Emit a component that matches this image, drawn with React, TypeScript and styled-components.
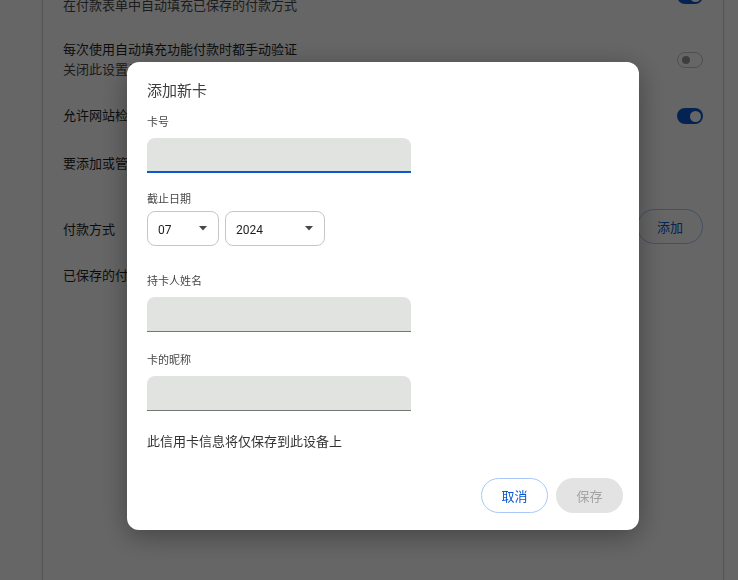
import React from "react";
import styled, { createGlobalStyle } from "styled-components";

const GlobalStyle = createGlobalStyle`
  html, body {
    margin: 0;
    padding: 0;
    height: 100%;
    overflow: hidden;
    background: #ffffff;
    font-family: Roboto, "Noto Sans CJK SC", sans-serif;
    color: #1f1f1f;
  }
`;

const Page = styled.div`
  height: 580px;
  overflow: hidden;
  padding: 0 15px 0 43px;
  box-sizing: border-box;
`;

const SettingsCard = styled.div`
  margin-top: -36px;
  background: #fff;
  min-height: 660px;
  box-shadow: 0 0 0 1px rgba(0, 0, 0, 0.12), 0 1px 3px rgba(0, 0, 0, 0.15);
`;

const Row = styled.div<{ $h: number; $top?: number }>`
  display: flex;
  align-items: center;
  justify-content: space-between;
  height: ${(p) => p.$h}px;
  margin-top: ${(p) => p.$top ?? 0}px;
  padding: 0 20px;
`;

const RowText = styled.div<{ $shift?: number }>`
  display: flex;
  flex-direction: column;
  gap: 2px;
  font-size: 13px;
  line-height: 18px;
  margin-top: ${(p) => p.$shift ?? 0}px;
`;

const Secondary = styled.span`
  color: #474747;
`;

const Toggle = styled.div<{ $on: boolean }>`
  width: 26px;
  height: 16px;
  border-radius: 8px;
  box-sizing: border-box;
  display: flex;
  align-items: center;
  justify-content: ${(p) => (p.$on ? "flex-end" : "flex-start")};
  padding: 0 3px;
  background: ${(p) => (p.$on ? "#0b57d0" : "transparent")};
  border: ${(p) => (p.$on ? "none" : "1px solid #c4c7c5")};

  &::after {
    content: "";
    width: ${(p) => (p.$on ? 11 : 8)}px;
    height: ${(p) => (p.$on ? 11 : 8)}px;
    border-radius: 50%;
    background: ${(p) => (p.$on ? "#ffffff" : "#9a9c9b")};
    margin: ${(p) => (p.$on ? "0 -1px 0 0" : "0 0 0 1px")};
  }
`;

const OutlineButton = styled.button<{ $w: number }>`
  width: ${(p) => p.$w}px;
  height: 35px;
  border-radius: 18px;
  border: 1px solid #a8c7fa;
  background: #fff;
  color: #0b57d0;
  font-family: inherit;
  font-size: 13px;
  cursor: pointer;
`;

const FilledButton = styled.button`
  width: 67px;
  height: 35px;
  border-radius: 18px;
  border: none;
  background: #e3e3e3;
  color: #a3a3a3;
  font-family: inherit;
  font-size: 13px;
`;

const Scrim = styled.div`
  position: fixed;
  inset: 0;
  background: rgba(0, 0, 0, 0.6);
  padding: 62px 0 0 127px;
  box-sizing: border-box;
`;

const Dialog = styled.div`
  width: 512px;
  height: 468px;
  box-sizing: border-box;
  background: #fff;
  border-radius: 12px;
  box-shadow: 0 6px 28px rgba(0, 0, 0, 0.35);
  padding: 19px 16px 17px 20px;
  display: flex;
  flex-direction: column;
`;

const Title = styled.h2`
  margin: 0;
  font-size: 15px;
  line-height: 20px;
  font-weight: 400;
  color: #3c3c3c;
`;

const Label = styled.div<{ $top: number; $gap: number }>`
  margin-top: ${(p) => p.$top}px;
  margin-bottom: ${(p) => p.$gap}px;
  font-size: 11px;
  line-height: 16px;
  color: #474747;
`;

const TextInput = styled.input<{ $focused?: boolean }>`
  display: block;
  width: 264px;
  height: 35px;
  box-sizing: border-box;
  border: none;
  border-radius: 8px 8px 0 0;
  background: #e1e3e1;
  border-bottom: ${(p) => (p.$focused ? "2px solid #0b57d0" : "1px solid #747775")};
  outline: none;
  padding: 0 10px;
  font-family: inherit;
  font-size: 13px;
`;

const SelectRow = styled.div`
  display: flex;
  gap: 6px;
`;

const Select = styled.div<{ $w: number }>`
  width: ${(p) => p.$w}px;
  height: 35px;
  box-sizing: border-box;
  border: 1px solid #c4c7c5;
  border-radius: 8px;
  display: flex;
  align-items: center;
  justify-content: space-between;
  padding: 3px 11px 0 10px;
  font-size: 12px;
  color: #1f1f1f;
`;

const Note = styled.p`
  margin: 22px 0 0;
  font-size: 13px;
  line-height: 18px;
  color: #333;
`;

const Actions = styled.div`
  margin-top: auto;
  display: flex;
  justify-content: flex-end;
  gap: 8px;
`;

const Caret = () => (
  <svg width="8" height="5" viewBox="0 0 8 5" style={{ marginTop: -3 }}>
    <path d="M0 0h8L4 4.5z" fill="#474747" />
  </svg>
);

export default function App() {
  return (
    <>
      <GlobalStyle />
      <Page>
        <SettingsCard>
          <Row $h={64}>
            <RowText>
              <span>保存并填充付款方式</span>
              <Secondary>在付款表单中自动填充已保存的付款方式</Secondary>
            </RowText>
            <Toggle $on />
          </Row>
          <Row $h={64}>
            <RowText>
              <span>每次使用自动填充功能付款时都手动验证</span>
              <Secondary>关闭此设置后，系统可能不会每次都要求您进行验证</Secondary>
            </RowText>
            <Toggle $on={false} />
          </Row>
          <Row $h={48}>
            <RowText>
              <span>允许网站检查您是否已保存付款方式</span>
            </RowText>
            <Toggle $on />
          </Row>
          <Row $h={48}>
            <RowText>
              <span>要添加或管理 Google Pay 付款方式，请访问您的 Google 账号</span>
            </RowText>
          </Row>
          <Row $h={52} $top={12}>
            <RowText $shift={7}>
              <span>付款方式</span>
            </RowText>
            <OutlineButton $w={66}>添加</OutlineButton>
          </Row>
          <Row $h={48}>
            <RowText>
              <span>已保存的付款方式将显示在此处</span>
            </RowText>
          </Row>
        </SettingsCard>
      </Page>

      <Scrim>
        <Dialog>
          <Title>添加新卡</Title>

          <Label $top={14} $gap={7}>卡号</Label>
          <TextInput $focused />

          <Label $top={19} $gap={3}>截止日期</Label>
          <SelectRow>
            <Select $w={72}>
              <span>07</span>
              <Caret />
            </Select>
            <Select $w={100}>
              <span>2024</span>
              <Caret />
            </Select>
          </SelectRow>

          <Label $top={28} $gap={7}>持卡人姓名</Label>
          <TextInput />

          <Label $top={21} $gap={7}>卡的昵称</Label>
          <TextInput />

          <Note>此信用卡信息将仅保存到此设备上</Note>

          <Actions>
            <OutlineButton $w={67}>取消</OutlineButton>
            <FilledButton>保存</FilledButton>
          </Actions>
        </Dialog>
      </Scrim>
    </>
  );
}
